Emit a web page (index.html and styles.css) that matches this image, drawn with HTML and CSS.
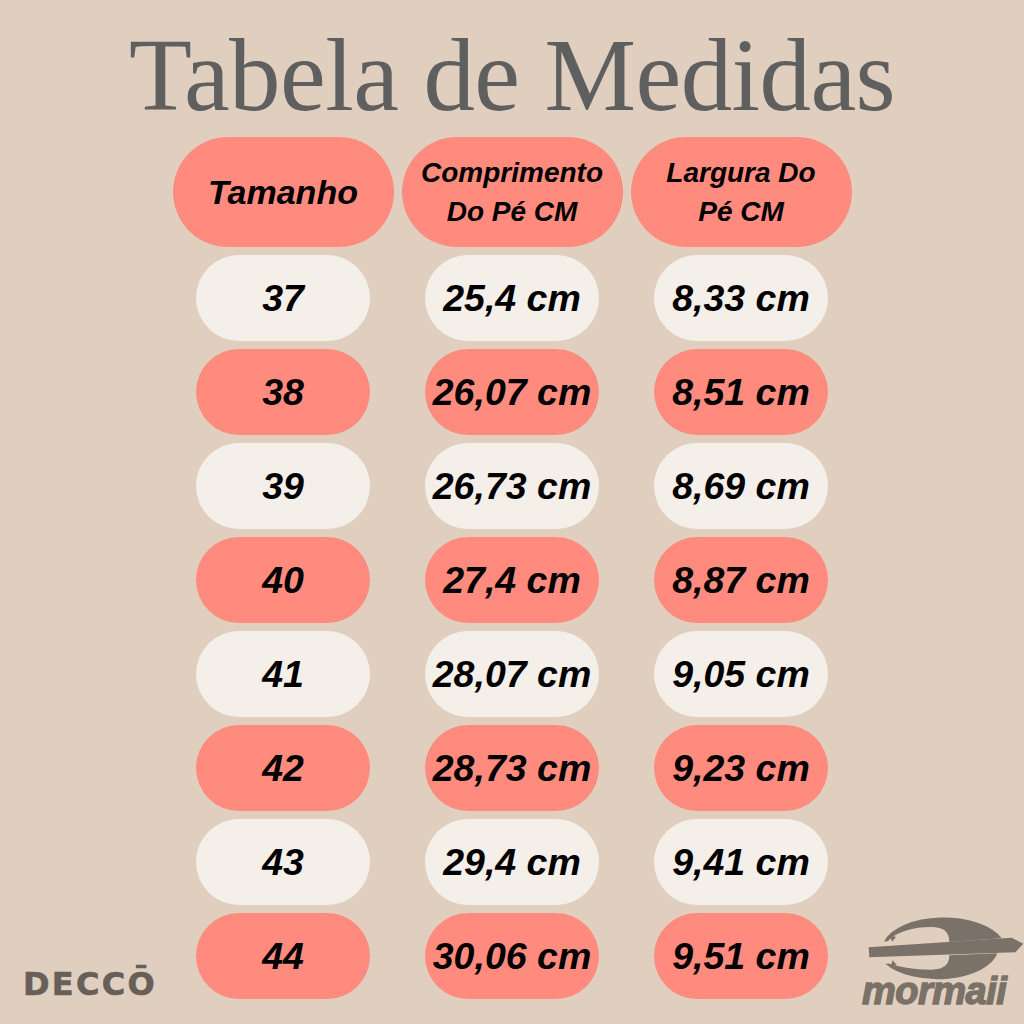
FILE: index.html
```html
<!DOCTYPE html>
<html lang="pt">
<head>
<meta charset="utf-8">
<title>Tabela de Medidas</title>
<link rel="stylesheet" href="styles.css">
</head>
<body>
<div class="page">
  <h1 class="title">Tabela de Medidas</h1>
  <div class="table">
    <div class="head head-lg c2">Tamanho</div>
    <div class="head c3">Comprimento<br>Do Pé CM</div>
    <div class="head c4">Largura Do<br>Pé CM</div>

    <div class="cell cream c2">37</div>
    <div class="cell cream c3">25,4 cm</div>
    <div class="cell cream c4">8,33 cm</div>

    <div class="cell salmon c2">38</div>
    <div class="cell salmon c3">26,07 cm</div>
    <div class="cell salmon c4">8,51 cm</div>

    <div class="cell cream c2">39</div>
    <div class="cell cream c3">26,73 cm</div>
    <div class="cell cream c4">8,69 cm</div>

    <div class="cell salmon c2">40</div>
    <div class="cell salmon c3">27,4 cm</div>
    <div class="cell salmon c4">8,87 cm</div>

    <div class="cell cream c2">41</div>
    <div class="cell cream c3">28,07 cm</div>
    <div class="cell cream c4">9,05 cm</div>

    <div class="cell salmon c2">42</div>
    <div class="cell salmon c3">28,73 cm</div>
    <div class="cell salmon c4">9,23 cm</div>

    <div class="cell cream c2">43</div>
    <div class="cell cream c3">29,4 cm</div>
    <div class="cell cream c4">9,41 cm</div>

    <div class="brand-left">DECCŌ</div>
    <div class="cell salmon c2">44</div>
    <div class="cell salmon c3">30,06 cm</div>
    <div class="cell salmon c4">9,51 cm</div>
    <div class="brand-right">
      <svg class="logo-mark" viewBox="0 0 492 222" xmlns="http://www.w3.org/2000/svg">
        <g fill="#7a7168">
          <polygon points="26,109 455,80 490,98 466,124 28,139"/>
          <path d="M72,92 A185 96 0 0 1 425,82 L268,93 C268,62 250,48 214,48 C160,48 110,62 84,90 Z"/>
          <polygon points="90,72 108,78 96,92"/>
          <path d="M76,158 A182 94 0 0 0 412,127 L268,133 C268,162 250,176 214,176 C160,176 112,166 88,158 Z"/>
          <polygon points="92,166 110,162 98,148"/>
        </g>
      </svg>
      <div class="logo-word">mormaii</div>
    </div>
  </div>
</div>
</body>
</html>
```

FILE: styles.css
```css
html, body {
  margin: 0;
  padding: 0;
  background: #e0cfbe;
}

.page {
  width: 1024px;
  height: 1024px;
  box-sizing: border-box;
  padding-top: 24px;
  overflow: hidden;
}

.title {
  margin: 0 0 10px;
  text-align: center;
  font-family: "Liberation Serif", "Times New Roman", serif;
  font-weight: normal;
  font-size: 103px;
  line-height: 103px;
  letter-spacing: -0.6px;
  color: #5f5f5f;
}

.table {
  display: grid;
  grid-template-columns: 1fr 229px 229px 229px 1fr;
  grid-template-rows: 110px repeat(8, 86px);
  row-gap: 8px;
  justify-items: center;
  font-family: "Liberation Sans", Arial, sans-serif;
  font-weight: bold;
  font-style: italic;
  color: #000;
}

.c2 { grid-column: 2; }
.c3 { grid-column: 3; }
.c4 { grid-column: 4; }

.head {
  width: 221px;
  height: 110px;
  border-radius: 55px;
  background: #fe8b7e;
  display: flex;
  align-items: center;
  justify-content: center;
  text-align: center;
  font-size: 28px;
  line-height: 39px;
}

.head-lg {
  font-size: 34px;
}

.cell {
  width: 174px;
  height: 86px;
  border-radius: 43px;
  display: flex;
  align-items: center;
  justify-content: center;
  font-size: 37.5px;
  white-space: nowrap;
}

.cream { background: #f5efe9; }
.salmon { background: #fe8b7e; }

.brand-left {
  grid-column: 1;
  justify-self: start;
  align-self: start;
  margin-top: 55px;
  padding-left: 23px;
  font-family: "DejaVu Sans", sans-serif;
  font-weight: bold;
  font-style: normal;
  font-size: 32px;
  line-height: 32px;
  letter-spacing: 2.3px;
  color: #675f58;
  -webkit-text-stroke: 0.6px #675f58;
}

.brand-right {
  grid-column: 5;
  justify-self: start;
  align-self: start;
  margin-top: -2px;
  padding-left: 4.5px;
  display: flex;
  flex-direction: column;
}

.logo-mark {
  display: block;
  width: 164px;
  height: 74px;
}

.logo-word {
  font-family: "Liberation Sans", Arial, sans-serif;
  font-weight: bold;
  font-style: italic;
  font-size: 38px;
  line-height: 22px;
  margin-top: -5px;
  padding-left: 2px;
  letter-spacing: -0.5px;
  color: #7a7168;
  -webkit-text-stroke: 1.4px #7a7168;
}
```
